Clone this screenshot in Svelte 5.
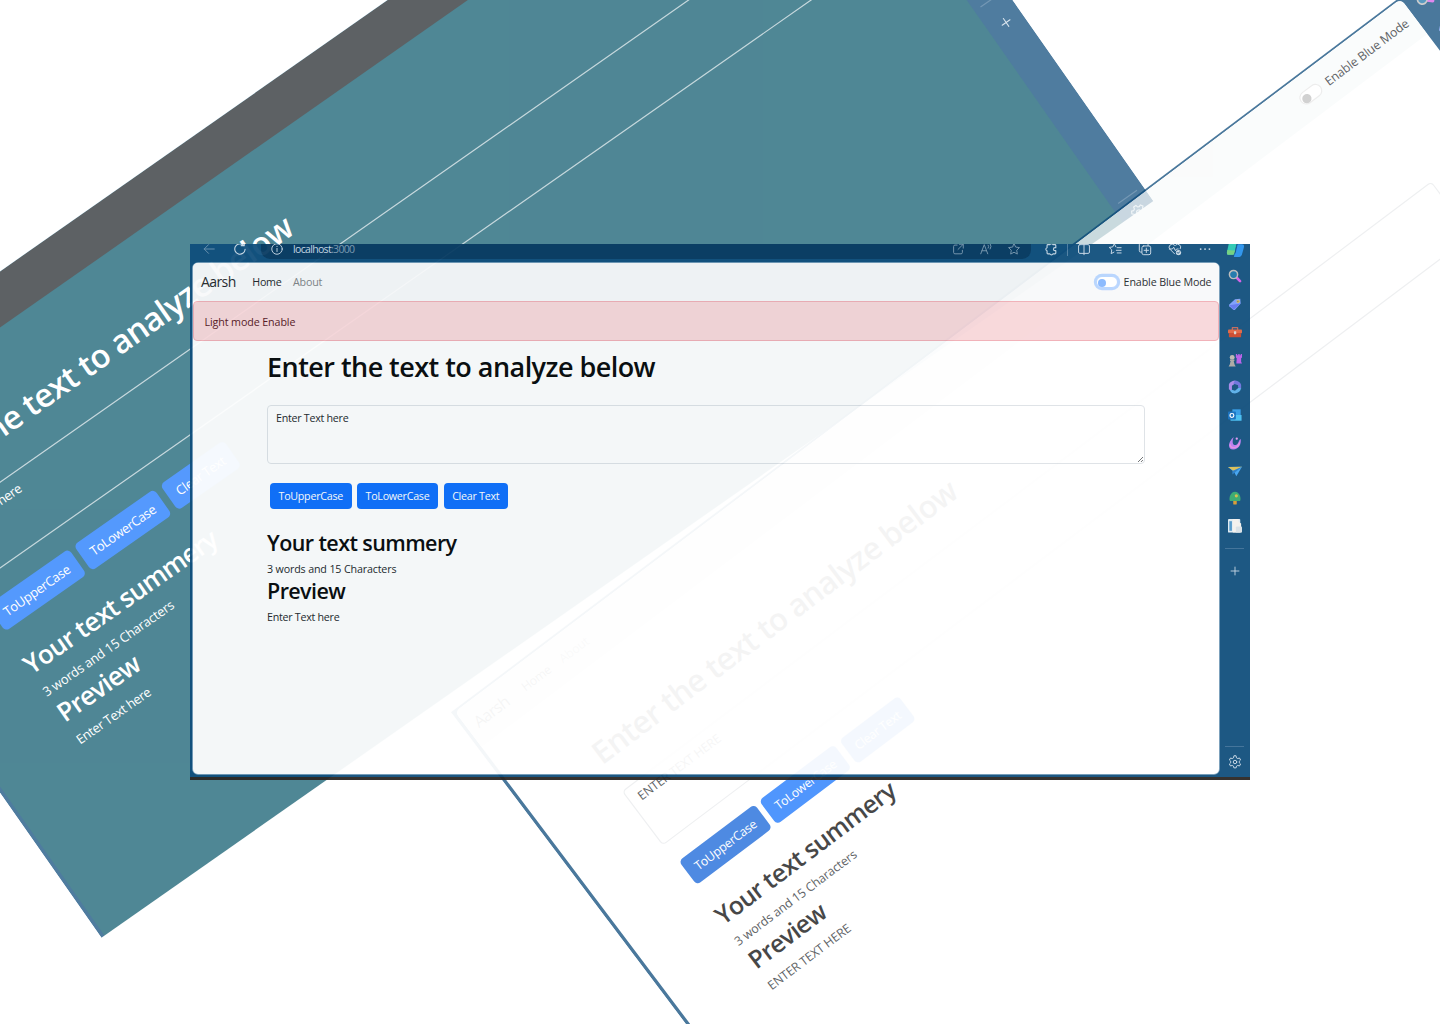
<script>
  const windows = [
    { id: 'teal', theme: 'blue', text: 'Enter Text here', notice: '' },
    { id: 'tilted', theme: 'light', text: 'ENTER TEXT HERE', notice: '' },
    { id: 'front', theme: 'light', text: 'Enter Text here', notice: 'Light mode Enable' }
  ];
  const apps = ['search', 'tag', 'toolbox', 'games', 'office', 'outlook', 'swirl', 'plane', 'tree', 'news'];
</script>

{#snippet icon(name)}
  <svg class="icon {name}" viewBox="0 0 16 16" fill="none" stroke="currentColor" stroke-width="1.1" stroke-linecap="round" stroke-linejoin="round">
    {#if name === 'back'}
      <path d="M14 8H2.5M7.5 3 2.5 8l5 5" />
    {:else if name === 'reload'}
      <path d="M13.8 8.500A5.900 5.900 0 1 1 11.8 3.600M12.8 .8v3.400H9.400" stroke-width="1.300" />
    {:else if name === 'info'}
      <circle cx="8" cy="8" r="6" /><path d="M8 7.3v3.6M8 4.9v.3" />
    {:else if name === 'external'}
      <path d="M7 3.5H4.5a1.5 1.5 0 0 0-1.5 1.5v7A1.5 1.5 0 0 0 4.500 13.500h7A1.500 1.500 0 0 0 13 12V9.500M9.500 2.500H14V7M14 2.500 8 8.500" />
    {:else if name === 'read'}
      <path d="M2 13.500 6 3l4 10.500M3.400 10h5.200M10.500 3.500q1.300 1.500 0 3.500M12.800 2q2 3 0 6" />
    {:else if name === 'star'}
      <path d="m8 1.800 1.900 4 4.300.6-3.100 3 .7 4.400L8 11.700l-3.800 2.100.7-4.400-3.100-3 4.300-.6z" />
    {:else if name === 'puzzle'}
      <path d="M4.500 3h2.300a1.800 1.800 0 0 1 3.400 0H12.500q1 0 1 1v2.500h-1a1.700 1.700 0 0 0 0 3.400h1V12.500q0 1-1 1h-2.300a1.800 1.800 0 0 1-3.400 0H4.500q-1 0-1-1V10a1.800 1.800 0 0 1 0-3.500V4q0-1 1-1z" stroke-width="1.300" />
    {:else if name === 'split'}
      <rect x="1.800" y="3" width="12.400" height="10" rx="1.500" /><path d="M8 1.500v13" />
    {:else if name === 'favorites'}
      <path d="M9 5.600 7.200 2 5.400 5.600l-4 .6 2.900 2.800-.7 4.300 3.200-1.700M10.500 6.500H15M9.500 9.500H15M10.500 12.500H15" />
    {:else if name === 'collections'}
      <path d="M4 11.500H3A1.500 1.500 0 0 1 1.500 10V3A1.500 1.500 0 0 1 3 1.500h7A1.500 1.500 0 0 1 11.500 3v1" /><rect x="4.500" y="4.500" width="10" height="10" rx="2" /><path d="M9.500 7v5M7 9.500h5" />
    {:else if name === 'heart'}
      <path d="M7.500 13.500 2.300 8.300a3.400 3.400 0 0 1 4.900-4.800l.8.800.8-.8a3.400 3.400 0 0 1 5.200 4.300M1.500 8h3.500l1.500-2 2 4 1.200-2h2" /><circle cx="12" cy="12" r="3" fill="currentColor" stroke="none" /><path d="m10.600 12 1 1 1.800-1.900" stroke="#14507f" />
    {:else if name === 'dots'}
      <path d="M3 8h.1M8 8h.1M13 8h.1" stroke-width="2" />
    {:else if name === 'copilot'}
      <g stroke="none"><path d="M4 0h5.500L7 11.500C6.600 12.500 6 13 5 13H1.500C0 13-.3 11.500 0 10L1.800 2Q2.300 0 4 0z" fill="#28c7b2" /><path d="M.3 8.500 7.500 9 7 11.500Q6.600 13 5 13H1.500C0 13-.3 11.500 0 10z" fill="#6fd07c" /><path d="M10.500 3H14c2 0 2.300 1.500 1.900 3l-1.900 7q-.6 2-2.300 2H6.500L8.500 6Q9 3 10.500 3z" fill="#2791ec" /><path d="M6.800 12.500 9 4 10 3l-2 8.500z" fill="#0c4c82" /></g>
    {:else if name === 'search'}
      <path d="m10 10 3.800 3.800" stroke="#d45be8" stroke-width="3" /><circle cx="6.300" cy="6.300" r="4.700" stroke="#b9b9b9" stroke-width="1.700" fill="#1974aa" />
    {:else if name === 'tag'}
      <path d="M8 2.500 14 2l.5 5.500-6.500 7q-1 .7-2 0L1.500 10.500q-.7-1 0-2z" fill="#7b9cfa" stroke="none" /><path d="m1.500 9.500 5 5 8-7z" fill="#5f74ee" stroke="none" /><circle cx="11.500" cy="5" r="1.400" fill="#4c5a92" stroke="#e2c14b" />
    {:else if name === 'toolbox'}
      <path d="M5 5V3h6v2" stroke="#bf6657" stroke-width="1.500" /><rect x="0" y="5" width="16" height="4.500" rx="1" fill="#e0623f" stroke="none" /><rect x="1" y="9" width="14" height="5" rx="1" fill="#c94528" stroke="none" /><rect x="6.800" y="7" width="2.600" height="3.500" rx=".5" fill="#d9d3cf" stroke="none" />
    {:else if name === 'games'}
      <g stroke="none"><path d="M9 1h1.500v1.500h1.200V1h1.600v1.500h1.200V1H16v4l-1 1v4l1 2H9.500L10 6 9 5z" fill="#b55be9" /><circle cx="4.800" cy="5" r="2.800" fill="#bdb7b1" /><path d="M2.300 7.500h5V9H6.500L7.500 13l1.300 2.500H.7L2 13l1-4h-.7z" fill="#a9a6a2" /></g>
    {:else if name === 'office'}
      <g stroke="none"><path d="M8 .5Q2 1.500 1 5v5.500L4.500 13V6.500L9.500 3z" fill="#a586e8" /><path d="M8 .5q6 1 7 5V10l-3.500-1.500V6L6 4z" fill="#6b6fdc" /><path d="M15 9.500Q14 14.500 8 15.500 3.500 15 2 12l2.500-1L8 12.300l4-3.500z" fill="#58aee8" /></g>
    {:else if name === 'outlook'}
      <g stroke="none"><path d="M5 1.500h9.500v9H5z" fill="#2e9ae6" /><path d="M2 8h13.500v6.500H3z" fill="#43bdf1" /><rect x="0" y="4" width="9" height="9" rx="1" fill="#0f6cbd" /></g><circle cx="4.500" cy="8.500" r="2.200" stroke="#fff" stroke-width="1.300" />
    {:else if name === 'swirl'}
      <path d="M6.500 1C-.5 7-.5 15.500 6 15.500c6 0 9.500-6 8.500-12-2.500 1-2 6-5.500 6.800C5 11 4.500 6 6.500 1z" fill="#b87bf0" stroke="none" /><path d="M2.500 10c0 5 9 4.500 10.500-2" stroke="#e38ce0" stroke-width="1.500" /><circle cx="10" cy="3" r="1.300" fill="#e39af5" stroke="none" />
    {:else if name === 'plane'}
      <g stroke="none"><path d="M0 3.500 16 3 9.500 14 7 9z" fill="#3fa2f0" /><path d="M0 3.500 16 3 6.500 8z" fill="#d9bd51" /><path d="M16 3 5 12V8z" fill="#257bc7" /></g>
    {:else if name === 'tree'}
      <rect x="6" y="10" width="4" height="5.500" rx="1" fill="#d7982c" stroke="none" /><path d="M8 .8C13 1 15.500 8 13.800 11.500H2.200C.5 8 3 1 8 .8z" fill="#32a76c" stroke="none" /><circle cx="9.500" cy="5.500" r="1.800" fill="#d6bb42" stroke="none" />
    {:else if name === 'news'}
      <g stroke="none"><rect x="0" y="0" width="14" height="15.500" rx="1" fill="#dfeaf2" /><path d="M1.500 2.500h3v11h-3z" fill="#4f96c8" /><path d="M5.500 0H12v3l3 2v10.500H5.500z" fill="#f4f1ee" /><rect x="9" y="8.500" width="7" height="7" rx="1" fill="#d9e1e6" /></g>
    {:else if name === 'plus'}
      <path d="M8 3.500v9M3.500 8h9" stroke-width="1" />
    {:else if name === 'gear'}
      <path d="m6.700 1.300-.4 2-1.500.8-1.900-.7L1.600 5.700l1.500 1.400v1.800l-1.500 1.400 1.300 2.300 1.900-.7 1.500.8.4 2h2.600l.4-2 1.500-.8 1.900.7 1.300-2.300-1.500-1.400V7.100l1.500-1.400-1.300-2.300-1.900.7-1.500-.8-.4-2z" /><circle cx="8" cy="8" r="2" />
    {/if}
  </svg>
{/snippet}

<div class="stage">
  {#each windows as win (win.id)}
    <section class="window {win.id} {win.theme}">
      <header class="toolbar">
        <div class="nav-icons">{@render icon('back')}{@render icon('reload')}</div>
        <div class="address">
          {@render icon('info')}
          <span class="host">localhost<i>:3000</i></span>
          <div class="page-actions">{@render icon('external')}{@render icon('read')}{@render icon('star')}</div>
        </div>
        <div class="tools">
          {@render icon('puzzle')}
          <span class="divider"></span>
          {#each ['split', 'favorites', 'collections', 'heart', 'dots', 'copilot'] as tool}{@render icon(tool)}{/each}
        </div>
      </header>
      <div class="body">
        <div class="page">
          <nav>
            <span class="brand">Aarsh</span>
            <span class="home">Home</span>
            <span class="about">About</span>
            <span class="switch"></span>
            <span class="mode">Enable Blue Mode</span>
          </nav>
          <div class="notice" class:shown={win.notice}>{win.notice}</div>
          <main>
            <h1>Enter the text to analyze below</h1>
            <div class="textarea">
              <span>{win.text}</span>
              <svg class="grip" viewBox="0 0 6 6" stroke="currentColor" stroke-width=".8"><path d="M0 6 6 0M3.500 6 6 3.500" /></svg>
            </div>
            <div class="buttons">
              <button class="upper">ToUpperCase</button>
              <button class="lower">ToLowerCase</button>
              <button class="clear">Clear Text</button>
            </div>
            <h2 class="summary">Your text summery</h2>
            <p class="count">3 words and 15 Characters</p>
            <h2 class="preview">Preview</h2>
            <p class="result">{win.text}</p>
          </main>
        </div>
        <aside>
          {#each apps as app}<div class="slot">{@render icon(app)}</div>{/each}
          <hr />
          {@render icon('plus')}
          <hr class="low" />
          {@render icon('gear')}
        </aside>
      </div>
      <div class="taskbar"></div>
    </section>
  {/each}
</div>

<style>
  :global(body) { margin: 0; background: #fff; }
  .stage {
    position: relative;
    width: 1440px;
    height: 1024px;
    overflow: hidden;
    font-family: 'Open Sans', 'Noto Sans', sans-serif;
  }
  .window {
    --chrome: #0f4e7c;
    --page: #fff;
    --nav: #f8f9fa;
    --ink: #212529;
    --heading: #060809;
    --border: #dee2e6;
    position: absolute;
    left: 0;
    top: 0;
    width: 1060px;
    height: 536px;
    display: flex;
    flex-direction: column;
    background: var(--chrome);
    color: var(--ink);
    font-size: 10.7px;
    line-height: 16px;
    letter-spacing: -0.27px;
    transform-origin: 0 0;
    overflow: hidden;
    box-sizing: border-box;
  }
  .front { left: 190px; top: 244px; opacity: 0.94; }
  .teal {
    --chrome: #054577;
    --page: #055469;
    --nav: #191f23;
    --ink: #fff;
    --heading: #fff;
    --border: rgba(255, 255, 255, 0.68);
    transform: translate(-258.2px, 424.1px) rotate(-35deg) scale(1.2115);
    clip-path: inset(19px 0 18.5px 0);
    opacity: 0.7;
  }
  .tilted {
    --chrome: #054577;
    --nav: #f9fbfb;
    --heading: #000;
    --border: #e8eaec;
    transform: translate(438.9px, 696.3px) rotate(-37deg) scale(1.1545);
    clip-path: inset(17.4px 0 27px 0);
    opacity: 0.72;
  }
  .icon { width: 14px; height: 14px; flex: none; overflow: visible; display: block; }

  .toolbar { height: 18.5px; flex: none; display: flex; align-items: flex-start; color: #c9d9e6; }
  .nav-icons { display: flex; gap: 17px; width: 59px; padding-left: 12px; margin-top: -2px; }
  .back { opacity: 0.5; }
  .address {
    width: 761px;
    height: 17px;
    margin-top: -2px;
    padding-left: 9px;
    display: flex;
    border-radius: 0 0 9px 9px;
    background: #073a61;
  }
  .host { margin-left: 9px; line-height: 15px; font-size: 10.5px; letter-spacing: -0.67px; }
  .host i { font-style: normal; opacity: 0.6; }
  .page-actions { display: flex; gap: 14px; margin: 0 10px 0 auto; opacity: 0.6; }
  .tools { display: flex; gap: 16.2px; margin: -2px 0 0 13px; }
  .divider { width: 1px; height: 14px; margin: 0 -7px; background: #4f7fa3; }
  .copilot { width: 17px; height: 17px; margin: -1px 0 0 -1.5px; }

  .body { display: flex; height: 513px; padding-left: 3px; }
  .page { width: 1026px; height: 511.5px; flex: none; box-sizing: border-box; background: var(--page); border-radius: 5px; overflow: hidden; }
  .front .page { box-shadow: 0 0 0 0.8px #8fb0c8; }
  .teal .page { border-radius: 0; }
  nav { height: 38.5px; display: flex; align-items: center; background: var(--nav); padding: 0 7.5px 0 8px; }
  .brand { font-size: 14px; letter-spacing: -0.6px; }
  .home { margin-left: 16.7px; }
  .about { margin-left: 11.5px; color: #808386; letter-spacing: -0.15px; }
  .switch { width: 22px; height: 11.5px; box-sizing: border-box; margin-left: auto; margin-right: 6px; padding: 1.5px; border: 0.5px solid #e6e6e6; border-radius: 6px; background: #fff; }
  .switch::before { content: ''; display: block; width: 8px; height: 8px; border-radius: 50%; background: #bfbfbf; }
  .front .switch { border-color: #b6d4fe; box-shadow: 0 0 0 2.2px #b6d4fe; }
  .front .switch::before { background: #86b7fe; }
  .mode { letter-spacing: -0.13px; }

  .notice { height: 40px; box-sizing: border-box; padding: 11.5px 10.5px; letter-spacing: -0.1px; }
  .notice.shown { background: #f8d7da; border: 1px solid #f1aeb5; border-radius: 4px; color: #58151c; }

  main { padding: 9.8px 74px 0 74px; display: flex; flex-direction: column; }
  h1, h2, p { margin: 0; font-weight: 600; white-space: nowrap; }
  h1 { color: var(--heading); font-size: 27px; line-height: 32px; letter-spacing: -0.54px; }
  h2 { color: var(--heading); font-size: 21.5px; line-height: 26px; letter-spacing: -0.59px; }
  p { margin-top: 5.2px; font-weight: 400; }
  .count { letter-spacing: -0.15px; }
  .textarea { position: relative; height: 59px; margin-top: 22.2px; box-sizing: border-box; padding: 4px 8px; border: 1px solid var(--border); border-radius: 4px; }
  .grip { position: absolute; right: 1px; bottom: 1px; width: 5px; height: 5px; }
  .buttons { display: flex; gap: 5.5px; margin: 19.1px 0 0 3px; }
  button { height: 26px; padding: 0; border: 0; border-radius: 4px; background: #0d6efd; color: #fff; font: inherit; letter-spacing: -0.26px; text-align: center; }
  .upper { width: 81.5px; }
  .lower { width: 81px; }
  .clear { width: 64.5px; }
  .tilted .upper { background: #0b5ed7; }
  .tilted .result, .tilted .textarea { letter-spacing: -0.1px; }
  .summary { margin-top: 21px; }
  .preview { margin-top: 0.9px; }

  aside { width: 31px; flex: none; display: flex; flex-direction: column; align-items: center; color: #c9d9e6; }
  .slot { height: 27.7px; margin-top: 0.07px; display: flex; align-items: center; }
  hr { width: 19px; height: 1px; margin: 8px 0 15px; border: 0; background: #3a6d95; flex: none; }
  hr.low { margin: 168px 0 8px; }
  .taskbar { height: 3px; margin-top: auto; background: #2a2623; }
</style>
